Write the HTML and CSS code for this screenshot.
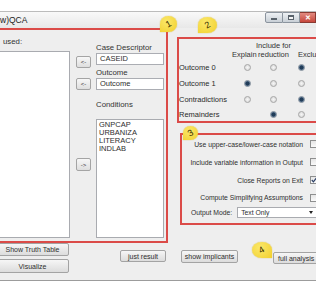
FILE: index.html
```html
<!DOCTYPE html>
<html lang="en">
<head>
    <meta charset="UTF-8">
    <meta name="viewport" content="width=device-width, initial-scale=1.0">
    <title>QCA</title>
    <link rel="stylesheet" href="styles.css">
</head>
<body>
    <div class="window">
        <div class="titlebar">
            <span class="title">w)QCA</span>
            <div class="controls">
                <span class="ctl min"><i></i></span>
                <span class="ctl max"><i></i></span>
                <span class="ctl close">✕</span>
            </div>
        </div>

        <div class="content">
            <div class="left-col">
                <div class="group group-vars">
                    <div class="col-vars">
                        <div class="label">used:</div>
                        <div class="listbox"></div>
                    </div>
                    <div class="col-arrows">
                        <button class="arrow first">&lt;-</button>
                        <button class="arrow second">&lt;-</button>
                        <button class="arrow third">-&gt;</button>
                    </div>
                    <div class="col-fields">
                        <div class="label">Case Descriptor</div>
                        <div class="textbox">CASEID</div>
                        <div class="label gap-s">Outcome</div>
                        <div class="textbox">Outcome</div>
                        <div class="label gap-l">Conditions</div>
                        <div class="listbox conditions">
                            <div>GNPCAP</div>
                            <div>URBANIZA</div>
                            <div>LITERACY</div>
                            <div>INDLAB</div>
                        </div>
                    </div>
                </div>
                <div class="left-actions">
                    <div class="stack">
                        <button class="btn truth">Show Truth Table</button>
                        <button class="btn visualize">Visualize</button>
                    </div>
                    <button class="btn just">just result</button>
                </div>
            </div>

            <div class="right-col">
                <div class="group group-cases">
                    <div></div>
                    <div class="head explain">Explain</div>
                    <div class="head include">Include for<br>reduction</div>
                    <div class="head exclude">Exclu</div>

                    <div class="row-label">Outcome 0</div>
                    <span class="radio"></span><span class="radio"></span><span class="radio on"></span>

                    <div class="row-label">Outcome 1</div>
                    <span class="radio on"></span><span class="radio"></span><span class="radio"></span>

                    <div class="row-label">Contradictions</div>
                    <span class="radio"></span><span class="radio"></span><span class="radio on"></span>

                    <div class="row-label">Remainders</div>
                    <span></span><span class="radio on"></span><span class="radio"></span>
                </div>

                <div class="group group-options">
                    <div class="option">Use upper-case/lower-case notation <span class="check"></span></div>
                    <div class="option">Include variable information in Output <span class="check"></span></div>
                    <div class="option">Close Reports on Exit
                        <span class="check">
                            <svg width="6" height="6" viewBox="0 0 6 6"><polyline points="0.8,3 2.4,4.8 5.3,1" fill="none" stroke="#2b3f66" stroke-width="1.2"/></svg>
                        </span>
                    </div>
                    <div class="option short">Compute Simplifying Assumptions <span class="check"></span></div>
                    <div class="mode-row">
                        <span class="mode-label">Output Mode:</span>
                        <div class="combo">Text Only <span class="caret"></span></div>
                    </div>
                </div>

                <div class="right-actions">
                    <button class="btn implicants">show implicants</button>
                    <button class="btn full">full analysis</button>
                </div>
            </div>
        </div>
    </div>

    <div class="callout c1"><span>1</span></div>
    <div class="callout c2"><span>2</span></div>
    <div class="callout c3"><span>3</span></div>
    <div class="callout c4"><span>4</span></div>
</body>
</html>
```

FILE: styles.css
```css
* {
    box-sizing: border-box;
}

body {
    margin: 0;
    width: 316px;
    height: 296px;
    overflow: hidden;
    background: #fff;
    font-family: "Liberation Sans", Arial, sans-serif;
    color: #2e2e2e;
}

button {
    font-family: inherit;
    color: inherit;
    padding: 0;
    margin: 0;
    white-space: nowrap;
    cursor: pointer;
}

.window {
    margin-top: 11px;
    height: 270px;
    background: #eeeeee;
    border-top: 1px solid #bcbcbc;
    border-bottom: 1px solid #9c9c9c;
    overflow: hidden;
}

/* title bar */
.titlebar {
    display: flex;
    height: 16px;
    background: linear-gradient(#f9f9f9, #e8e8e8);
}

.title {
    font-size: 8.5px;
    line-height: 10px;
    padding-top: 3px;
    color: #222;
}

.controls {
    margin-left: auto;
    display: flex;
    height: 11px;
}

.ctl {
    display: flex;
    align-items: center;
    justify-content: center;
    height: 11px;
    border: 1px solid #8b949e;
    background: linear-gradient(#eef1f4, #c8cfd6);
}

.ctl.min {
    width: 18px;
    border-radius: 2px 0 0 2px;
}

.ctl.min i {
    width: 6px;
    height: 2px;
    margin-top: 3px;
    background: #fff;
    border: 1px solid #59626b;
}

.ctl.max {
    width: 17px;
    border-left: none;
}

.ctl.max i {
    width: 6px;
    height: 5px;
    border: 1px solid #59626b;
    border-top-width: 2px;
    background: #f5f5f5;
}

.ctl.close {
    width: 16px;
    border-left: none;
    border-color: #8a3a32;
    background: linear-gradient(#e28a80, #c7473c);
    color: #fff;
    font-size: 7px;
    font-weight: bold;
}

/* body of the window */
.content {
    display: flex;
    height: 252px;
}

.group {
    border: 2px solid #db4b48;
}

.left-col {
    display: flex;
    flex-direction: column;
    margin-left: -4px;
    width: 172px;
}

.group-vars {
    display: flex;
    height: 215px;
}

.label {
    font-size: 7.8px;
    line-height: 10px;
    color: #333;
}

.col-vars {
    display: flex;
    flex-direction: column;
    width: 72px;
    padding: 7px 0 3px;
}

.col-vars .label {
    padding-left: 5px;
}

.listbox {
    flex: 1;
    margin-top: 4px;
    background: #fff;
    border: 1px solid #a9abb0;
}

.col-arrows {
    display: flex;
    flex-direction: column;
    width: 15px;
    margin-left: 6px;
}

.arrow {
    height: 12px;
    font-size: 6px;
    border: 1px solid #a4a4a4;
    border-radius: 2px;
    background: linear-gradient(#f7f7f7, #dedede);
}

.arrow.first { margin-top: 26px; }
.arrow.second { margin-top: 10px; }
.arrow.third { margin-top: 68px; height: 13px; }

.col-fields {
    display: flex;
    flex-direction: column;
    width: 68px;
    margin-left: 5px;
    padding: 13px 0 3px;
}

.textbox {
    height: 12px;
    padding-left: 3px;
    font-size: 7.5px;
    line-height: 10px;
    color: #2e2e2e;
    background: #fff;
    border: 1px solid #abadb3;
}

.gap-s { margin-top: 3px; }
.gap-l { margin-top: 10px; }

.conditions {
    margin-top: 9px;
    padding: 1px 2px;
    font-size: 7.5px;
    line-height: 8px;
}

.left-actions {
    display: flex;
    flex: 1;
}

.btn {
    font-size: 7px;
    border: 1px solid #a3a3a3;
    border-radius: 2px;
    background: linear-gradient(#f6f6f6, #dcdcdc);
}

.stack {
    display: flex;
    flex-direction: column;
    width: 73px;
}

.btn.truth { height: 13px; }
.btn.visualize { height: 14px; margin-top: 3px; }

.btn.just {
    width: 46px;
    height: 12px;
    margin: 7px 2px 0 auto;
}

/* right side */
.right-col {
    display: flex;
    flex-direction: column;
    width: 148px;
}

.group-cases {
    display: grid;
    grid-template-columns: 53px 30px 23px 32px;
    grid-template-rows: 18px 17px 15px 16px 14px;
    align-items: center;
    justify-items: center;
    width: 150px;
    height: 86px;
    margin: 9px 0 0 9px;
    padding-top: 2px;
    font-size: 7.5px;
}

.head {
    line-height: 9px;
    white-space: nowrap;
    color: #333;
}

.head.explain {
    align-self: end;
    justify-self: start;
}

.head.include {
    text-align: center;
}

.head.exclude {
    align-self: end;
    justify-self: start;
    padding-left: 13px;
}

.row-label {
    justify-self: start;
    color: #2a2a2a;
}

.radio {
    width: 7px;
    height: 7px;
    border-radius: 50%;
    border: 1px solid #a6a6a6;
    background: radial-gradient(circle, #f6f6f6, #d3d3d3);
}

.radio.on {
    border-color: #7d8a98;
    background: radial-gradient(circle, #213c58 0 1.6px, #5b7795 2.4px, #dfe5eb 3.2px);
}

.group-options {
    width: 150px;
    height: 92px;
    margin: 10px 0 0 12px;
    padding-right: 10px;
    font-size: 6.8px;
}

.option {
    display: flex;
    align-items: center;
    justify-content: flex-end;
    height: 18px;
    white-space: nowrap;
}

.option.short {
    height: 17px;
}

.check {
    display: flex;
    align-items: center;
    justify-content: center;
    width: 8px;
    height: 8px;
    margin-left: 7px;
    border: 1px solid #8e8f8f;
    background: linear-gradient(#e6e6e6, #fafafa);
}

.mode-row {
    display: flex;
    align-items: center;
    height: 12px;
    white-space: nowrap;
}

.mode-label {
    margin-left: 9px;
}

.combo {
    display: flex;
    align-items: center;
    flex: none;
    width: 81px;
    height: 11px;
    margin-left: 5px;
    padding-left: 3px;
    background: #fff;
    border: 1px solid #a9abb0;
}

.caret {
    margin-left: auto;
    margin-right: 4px;
    border-left: 2.5px solid transparent;
    border-right: 2.5px solid transparent;
    border-top: 3px solid #222;
}

.right-actions {
    display: flex;
    align-items: flex-start;
    margin-top: 25px;
}

.btn.implicants {
    flex: none;
    width: 57px;
    height: 13px;
    margin-left: 13px;
}

.btn.full {
    flex: none;
    width: 55px;
    height: 12px;
    margin: 2px 0 0 35px;
    padding-left: 4px;
    text-align: left;
}

/* numbered annotation pins */
.callout {
    position: absolute;
    display: flex;
    align-items: center;
    justify-content: center;
    width: 17px;
    height: 16px;
    background: radial-gradient(circle at 40% 35%, #fbe86a, #f1cf2c);
    border-radius: 50% 50% 50% 0;
    box-shadow: 0 0 1px #c9a400;
}

.callout span {
    font-size: 9px;
    color: #3a3000;
    transform: rotate(-30deg);
}

.c1 { left: 160px; top: 16px; }
.c2 { left: 198px; top: 17px; width: 19px; }
.c3 { left: 183px; top: 126px; width: 15px; height: 14px; }
.c4 {
    left: 252px;
    top: 242px;
    width: 20px;
    height: 16px;
    border-radius: 50% 50% 0 50%;
}
```
